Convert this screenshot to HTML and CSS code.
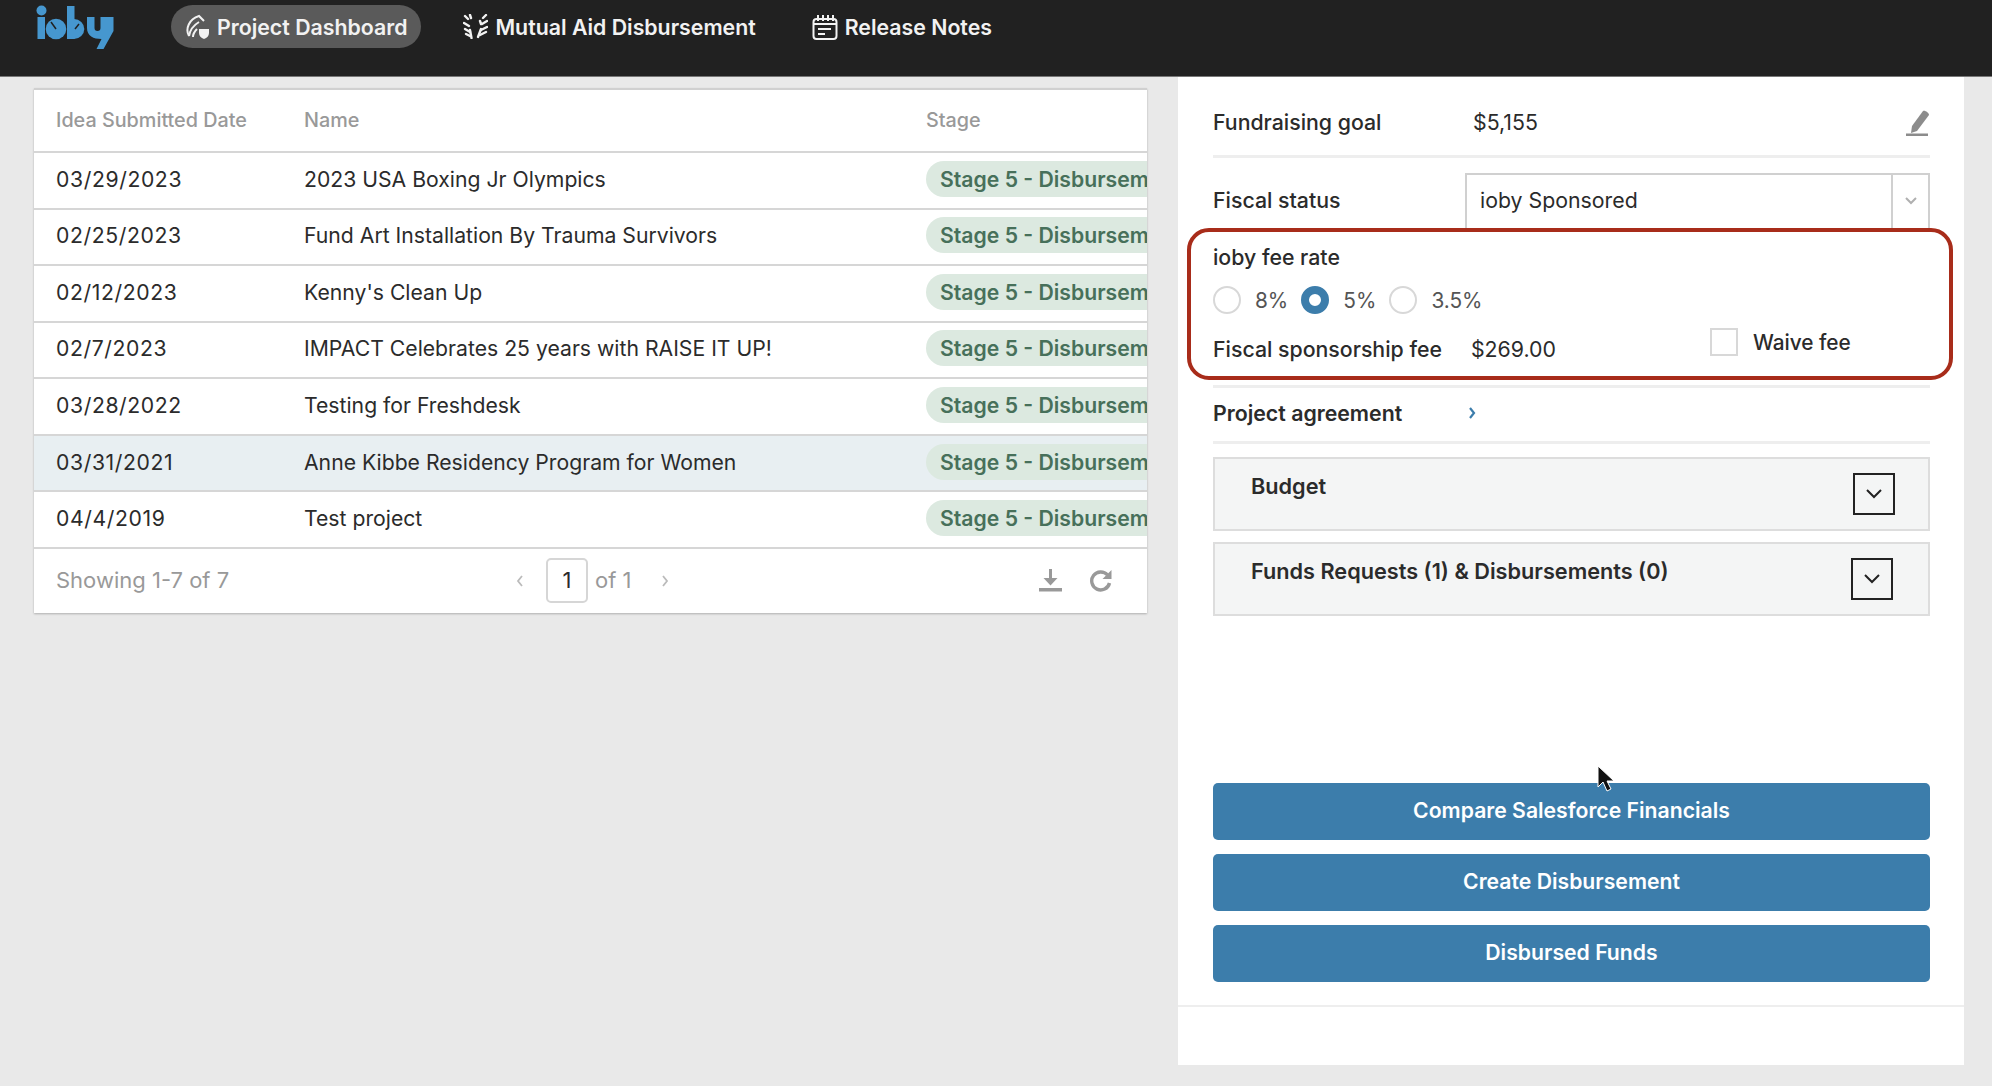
FILE: index.html
```html
<!DOCTYPE html>
<html lang="en">
<head>
  <meta charset="UTF-8">
  <title>Project Dashboard</title>
  <link rel="stylesheet" href="styles.css">
</head>
<body>
  <header class="top-nav">
    <svg class="logo" width="80" height="44" viewBox="36 5 80 44" fill="#4697cf">
      <circle cx="41.500" cy="10.500" r="5"/>
      <rect x="37.500" y="17" width="7.500" height="22"/>
      <circle cx="56" cy="29" r="10.300"/>
      <path d="M56 29L51 22" stroke="#212121" stroke-width="1.500"/>
      <rect x="67" y="6" width="7.500" height="33"/>
      <path d="M74 19a10.300 10 0 1 1 0 20z"/>
      <path d="M75 29l4-5" stroke="#212121" stroke-width="1.500"/>
      <path d="M87 17h7.500v11a3 3 0 0 0 6 0V17h13v14l-10 18h-7l5-10c-8 0-14.500-3-14.500-11z"/>
    </svg>
    <a class="nav-item active">
      <svg width="25" height="25" viewBox="0 0 25 25" fill="none" stroke="#f2f2f2" stroke-width="2">
        <path d="M4 22C0 15 4 5 14 2l5 5"/>
        <path d="M4 22c1-6 5-11 10-14"/>
        <path d="M8 23c0-3 2-6 4-8"/>
        <path d="M14 15h10v4c0 3-2 5-5 6-3-1-5-3-5-6z" fill="#f2f2f2" stroke="none"/>
      </svg>
      Project Dashboard
    </a>
    <a class="nav-item">
      <svg width="25" height="25" viewBox="0 0 25 25" fill="none" stroke="#f2f2f2" stroke-width="2.400" stroke-linecap="round">
        <path d="M8.500 24L7 16"/>
        <path d="M15 23l3-8"/>
        <path d="M2 2l3 3M7 1l1 3M1 9l5 3M2 15l5 3M3 20l4 2"/>
        <path d="M23 1l-3 3M24 7l-5 3M17 7l1 3M24 13l-6 3M23 18l-6 3"/>
      </svg>
      Mutual Aid Disbursement
    </a>
    <a class="nav-item">
      <svg width="26" height="26" viewBox="0 0 26 26" fill="none" stroke="#f2f2f2" stroke-width="2">
        <rect x="1.500" y="5" width="23" height="20" rx="3"/>
        <path d="M6 1v6M11 1v6M16 1v6M21 1v6M1.500 10h23"/>
        <path d="M6 15h13M6 20h7"/>
      </svg>
      Release Notes
    </a>
  </header>

  <main class="content">
    <section class="table-card">
      <div class="row head-row">
        <div class="col-date">Idea Submitted Date</div>
        <div class="col-name">Name</div>
        <div class="col-stage">Stage</div>
      </div>
      <div class="row">
        <div class="col-date">03/29/2023</div>
        <div class="col-name">2023 USA Boxing Jr Olympics</div>
        <div class="col-stage"><span class="pill">Stage 5 - Disbursement</span></div>
      </div>
      <div class="row">
        <div class="col-date">02/25/2023</div>
        <div class="col-name">Fund Art Installation By Trauma Survivors</div>
        <div class="col-stage"><span class="pill">Stage 5 - Disbursement</span></div>
      </div>
      <div class="row">
        <div class="col-date">02/12/2023</div>
        <div class="col-name">Kenny's Clean Up</div>
        <div class="col-stage"><span class="pill">Stage 5 - Disbursement</span></div>
      </div>
      <div class="row">
        <div class="col-date">02/7/2023</div>
        <div class="col-name">IMPACT Celebrates 25 years with RAISE IT UP!</div>
        <div class="col-stage"><span class="pill">Stage 5 - Disbursement</span></div>
      </div>
      <div class="row">
        <div class="col-date">03/28/2022</div>
        <div class="col-name">Testing for Freshdesk</div>
        <div class="col-stage"><span class="pill">Stage 5 - Disbursement</span></div>
      </div>
      <div class="row selected">
        <div class="col-date">03/31/2021</div>
        <div class="col-name">Anne Kibbe Residency Program for Women</div>
        <div class="col-stage"><span class="pill">Stage 5 - Disbursement</span></div>
      </div>
      <div class="row">
        <div class="col-date">04/4/2019</div>
        <div class="col-name">Test project</div>
        <div class="col-stage"><span class="pill">Stage 5 - Disbursement</span></div>
      </div>
      <div class="table-foot">
        <div class="showing">Showing 1-7 of 7</div>
        <div class="pager">
          <svg width="10" height="14" viewBox="0 0 10 14" fill="none" stroke="#bbb" stroke-width="1.800"><path d="M7 2L3 7l4 5"/></svg>
          <span class="page-input">1</span>
          <span>of 1</span>
          <svg width="10" height="14" viewBox="0 0 10 14" fill="none" stroke="#bbb" stroke-width="1.800"><path d="M3 2l4 5-4 5"/></svg>
        </div>
        <div class="foot-icons">
          <svg width="23" height="23" viewBox="0 0 23 23" fill="#999">
            <rect x="0" y="19" width="23" height="3.500"/>
            <rect x="10" y="0" width="3" height="11"/>
            <path d="M4.500 9h14l-7 7.500z"/>
          </svg>
          <svg width="23" height="23" viewBox="0 0 23 23" fill="none" stroke="#999" stroke-width="3.400">
            <path d="M18.500 6A9 9 0 1 0 20.500 14"/>
            <path d="M22.500 1v9h-9z" fill="#999" stroke="none"/>
          </svg>
        </div>
      </div>
    </section>

    <aside class="side-panel">
      <div class="panel-body">
        <div class="goal-row">
          <span class="label goal-label">Fundraising goal</span>
          <span>$5,155</span>
          <svg class="edit-icon" width="24" height="26" viewBox="0 0 24 26" fill="#8c8c8c">
            <path d="M17 1c2-1 6 2 6 4L11 21l-6 2 1-7z"/>
            <rect x="0" y="23.500" width="22" height="2.500"/>
          </svg>
        </div>
        <div class="fiscal-row">
          <span class="label">Fiscal status</span>
          <div class="select-box">
            <span class="select-value">ioby Sponsored</span>
            <span class="select-arrow">
              <svg width="12" height="8" viewBox="0 0 12 8" fill="none" stroke="#b0b0b0" stroke-width="2"><path d="M1 1l5 5 5-5"/></svg>
            </span>
          </div>
        </div>

        <div class="fee-box">
          <div class="fee-title">ioby fee rate</div>
          <div class="radio-row">
            <span class="radio"></span><span class="radio-label">8%</span>
            <span class="radio checked"></span><span class="radio-label">5%</span>
            <span class="radio"></span><span class="radio-label">3.5%</span>
          </div>
          <div class="fee-row">
            <span class="label">Fiscal sponsorship fee</span>
            <span class="fee-amount">$269.00</span>
            <span class="checkbox"></span>
            <span class="waive">Waive fee</span>
          </div>
        </div>

        <div class="divider"></div>
        <div class="agreement-row">
          <span class="label">Project agreement</span>
          <svg width="8" height="14" viewBox="0 0 8 14" fill="none" stroke="#3c7dab" stroke-width="2.200"><path d="M2 2l4 5-4 5"/></svg>
        </div>
        <div class="divider"></div>

        <div class="accordion">
          <span class="label">Budget</span>
          <span class="acc-toggle">
            <svg width="16" height="10" viewBox="0 0 16 10" fill="none" stroke="#222" stroke-width="2"><path d="M1 1l7 7 7-7"/></svg>
          </span>
        </div>
        <div class="accordion funds">
          <span class="label">Funds Requests (1) &amp; Disbursements (0)</span>
          <span class="acc-toggle">
            <svg width="16" height="10" viewBox="0 0 16 10" fill="none" stroke="#222" stroke-width="2"><path d="M1 1l7 7 7-7"/></svg>
          </span>
        </div>

        <div class="actions">
          <button>Compare Salesforce Financials</button>
          <button>Create Disbursement</button>
          <button>Disbursed Funds</button>
        </div>
      </div>
      <div class="panel-foot"></div>
    </aside>
  </main>

  <svg class="cursor" width="18" height="28" viewBox="0 0 18 28">
    <path d="M1 1v21l5-5 4 9 4-2-4-8h7z" fill="#111" stroke="#fff" stroke-width="1"/>
  </svg>
</body>
</html>
```

FILE: styles.css
```css
* { box-sizing: border-box; }
body {
  margin: 0;
  height: 1086px;
  overflow: hidden;
  background: #e9e9e9;
  color: #2b2b2b;
  font-family: Inter, "Liberation Sans", sans-serif;
  font-size: 21.3px;
}

.top-nav {
  height: 77px;
  background: #212121;
  border-bottom: 1px solid #777;
  display: flex;
  align-items: flex-start;
  padding: 5px 0 0 36px;
}
.logo { margin-right: 55px; }
.nav-item {
  height: 43px;
  display: flex;
  align-items: center;
  gap: 7px;
  padding: 0 14px;
  margin-right: 28px;
  border-radius: 22px;
  color: #f2f2f2;
  font-weight: 600;
}
.nav-item.active { background: #5a5a5a; }

.content {
  display: flex;
  align-items: flex-start;
  padding-left: 34px;
}

.table-card {
  width: 1113px;
  height: 525px;
  margin-top: 11px;
  background: #fff;
  border-top: 2px solid #d0d0d0;
  overflow: hidden;
  box-shadow: 0 1px 2px rgba(0, 0, 0, 0.25);
}
.row {
  height: 56.57px;
  display: flex;
  align-items: center;
  border-bottom: 2px solid #d6d6d6;
  padding-left: 22px;
  padding-bottom: 3px;
  font-size: 21.2px;
  white-space: nowrap;
}
.row.selected { background: #e8eff2; }
.head-row {
  height: 63px;
  padding-bottom: 2px;
  color: #999;
  font-size: 19.8px;
  font-weight: 500;
}
.col-date { width: 248px; flex: none; }
.row:not(.head-row) .col-date { letter-spacing: 0.6px; }
.col-name { width: 622px; flex: none; }
.col-stage { flex: none; }
.pill {
  display: inline-block;
  height: 36px;
  line-height: 36px;
  padding: 0 14px;
  border-radius: 18px;
  background: #dce9e0;
  color: #47705a;
  font-weight: 600;
}
.table-foot {
  height: 64px;
  display: flex;
  align-items: center;
  padding: 0 35px 0 22px;
  color: #999;
  font-size: 22px;
}
.showing { width: 459px; padding-bottom: 2px; }
.pager {
  display: flex;
  align-items: center;
  gap: 7px;
}
.pager span:not(.page-input) { padding-bottom: 2px; }
.pager svg:first-child { margin-right: 14px; }
.pager svg:last-child { margin-left: 22px; }
.page-input {
  width: 42px;
  height: 45px;
  line-height: 41px;
  text-align: center;
  color: #2b2b2b;
  border: 2px solid #d6d6d6;
  border-radius: 5px;
}
.foot-icons {
  margin-left: auto;
  display: flex;
  gap: 27px;
}

.side-panel {
  width: 786px;
  height: 988px;
  margin-left: 31px;
  background: #fff;
  display: flex;
  flex-direction: column;
}
.panel-body {
  height: 930px;
  padding: 0 34px 0 35px;
  border-bottom: 2px solid #eee;
}
.label { font-weight: 500; }
.goal-row {
  height: 81px;
  display: flex;
  align-items: center;
  border-bottom: 3px solid #eee;
  padding-top: 12px;
}
.goal-label { width: 260px; }
.edit-icon { margin-left: auto; margin-top: 2px; }
.fiscal-row {
  height: 55px;
  margin-top: 15px;
  display: flex;
  align-items: flex-start;
}
.fiscal-row .label { width: 252px; padding-top: 14px; }
.select-box {
  flex: 1;
  height: 55px;
  display: flex;
  border: 2px solid #d0d0d0;
  border-bottom: none;
}
.select-value { flex: 1; padding: 12px 0 0 13px; }
.select-arrow {
  width: 37px;
  border-left: 2px solid #d0d0d0;
  padding: 9px 0 0 12px;
}

.fee-box {
  height: 152px;
  margin: 0 -23px 0 -26px;
  padding: 0 0 0 22px;
  border: 4px solid #a82c1a;
  border-radius: 22px;
  background: #fff;
}
.fee-title {
  font-weight: 500;
  padding-top: 13px;
  line-height: 24px;
}
.radio-row {
  display: flex;
  align-items: center;
  height: 28px;
  margin-top: 17px;
}
.radio {
  width: 28px;
  height: 28px;
  border: 2px solid #d8d8d8;
  border-radius: 50%;
}
.radio.checked { border: 8px solid #3c7dab; }
.radio-label {
  margin: 0 14px;
  color: #555;
  font-size: 20.8px;
}
.radio-label + .radio { margin-left: -1px; }
.fee-row {
  display: flex;
  align-items: center;
  height: 28px;
  margin-top: 21px;
}
.fee-amount { margin-left: 29px; }
.checkbox {
  width: 28px;
  height: 28px;
  border: 2px solid #d8d8d8;
  margin-left: 154px;
  margin-top: -14px;
}
.waive {
  margin-left: 15px;
  margin-top: -14px;
  font-size: 20.8px;
  font-weight: 500;
}

.divider {
  height: 3px;
  margin-top: 5px;
  background: #eee;
}
.agreement-row {
  height: 53px;
  margin-bottom: -5px;
  padding-bottom: 4px;
  display: flex;
  align-items: center;
}
.agreement-row .label { width: 255px; font-weight: 600; }

.accordion {
  height: 74px;
  margin-top: 13px;
  padding: 14px 33px 0 36px;
  display: flex;
  align-items: flex-start;
  justify-content: space-between;
  background: #f4f5f5;
  border: 2px solid #ddd;
}
.accordion .label {
  margin-top: 1px;
  font-size: 21.7px;
  font-weight: 600;
  line-height: 24px;
}
.accordion.funds { margin-top: 11px; padding-right: 35px; }
.acc-toggle {
  width: 42px;
  height: 42px;
  display: flex;
  align-items: center;
  justify-content: center;
  border: 2px solid #222;
}

.actions {
  margin-top: 167px;
  display: flex;
  flex-direction: column;
  gap: 14px;
}
.actions button {
  height: 57px;
  padding-bottom: 4px;
  border: none;
  border-radius: 5px;
  background: #3c7dab;
  color: #fff;
  font-family: inherit;
  font-size: 21.2px;
  font-weight: 600;
}

.panel-foot { flex: 1; }

/* mouse pointer caught in the screenshot */
.cursor {
  position: absolute;
  left: 1597px;
  top: 765px;
}
```
